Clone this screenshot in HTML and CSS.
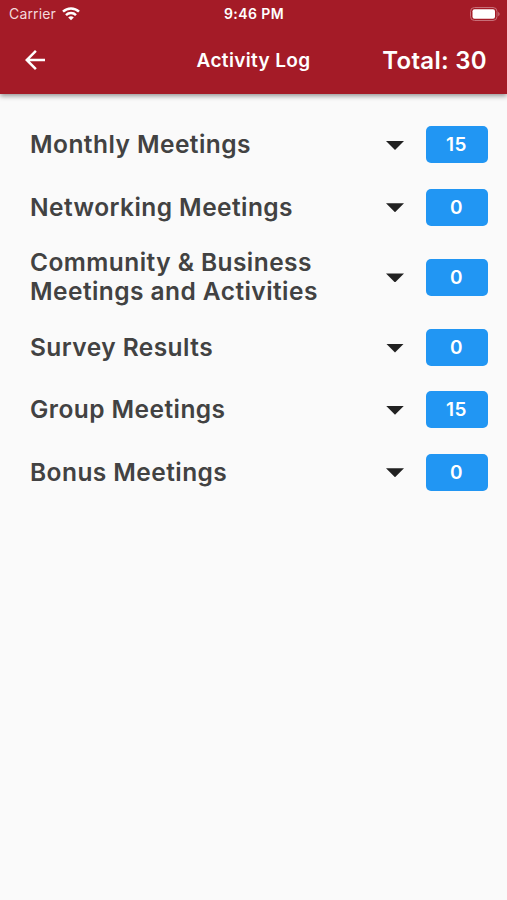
FILE: index.html
```html
<!DOCTYPE html>
<html lang="en">
<head>
<meta charset="utf-8">
<title>Activity Log</title>
<link rel="stylesheet" href="styles.css">
</head>
<body>
<header class="top">
  <div class="status">
    <div class="carrier"><span class="carrier-name">Carrier</span>
      <svg class="wifi" viewBox="0 0 18 14" width="18" height="14"><g fill="none" stroke="#fff" stroke-width="2.5"><path d="M1 4.700a11.500 11.500 0 0 1 16 0"/><path d="M4 8.100a7.200 7.200 0 0 1 10 0"/></g><path fill="#fff" d="M9 13.300 6.200 10.500a4 4 0 0 1 5.600 0z"/></svg>
    </div>
    <span class="clock">9:46 PM</span>
    <svg class="battery" viewBox="0 0 30 14" width="30" height="14"><rect x=".5" y=".5" width="26.500" height="13" rx="4" fill="none" stroke="#c76f78"/><rect x="2.500" y="2.300" width="22.500" height="9.400" rx="2" fill="#fff"/><path d="M28.200 4.700q3 2.300 0 4.600z" fill="#c76f78"/></svg>
  </div>
  <div class="bar">
    <svg class="back" viewBox="4 4 16 16" width="20" height="20"><path fill="#fff" d="M20 11H7.830l5.590-5.590L12 4l-8 8 8 8 1.410-1.410L7.830 13H20z"/></svg>
    <h1 class="title">Activity Log</h1>
    <span class="total">Total: 30</span>
  </div>
</header>
<main class="list">
  <div class="row"><span class="label">Monthly Meetings</span><i class="caret"></i><span class="count">15</span></div>
  <div class="row"><span class="label">Networking Meetings</span><i class="caret"></i><span class="count">0</span></div>
  <div class="row tall"><span class="label">Community &amp; Business<br>Meetings and Activities</span><i class="caret"></i><span class="count">0</span></div>
  <div class="row"><span class="label">Survey Results</span><i class="caret"></i><span class="count">0</span></div>
  <div class="row"><span class="label">Group Meetings</span><i class="caret"></i><span class="count">15</span></div>
  <div class="row"><span class="label">Bonus Meetings</span><i class="caret"></i><span class="count">0</span></div>
</main>
</body>
</html>
```
FILE: styles.css
```css
* { box-sizing: border-box; }
body { margin: 0; min-height: 900px; background: #fafafa; font-family: Inter, "Liberation Sans", sans-serif; color: #424242; }
.top { height: 94px; background: #a41b27; color: #fff; box-shadow: 0 2px 5px rgba(0,0,0,.42); }
.status { height: 27px; display: grid; grid-template-columns: 1fr auto 1fr; align-items: center; padding: 0 7px 0 9px; }
.carrier { display: flex; align-items: center; gap: 6px; font-size: 14px; letter-spacing: .15px; color: #f3d9dc; }
.clock { font-size: 14px; font-weight: 600; letter-spacing: .4px; margin-right: 1px; }
.battery { justify-self: end; }
.bar { height: 66px; display: grid; grid-template-columns: 1fr auto 1fr; align-items: center; padding: 0 20px 0 20px; }
.back { margin: 0 0 1px 5px; }
.title { margin: 0; font-size: 19px; font-weight: 600; letter-spacing: .35px; }
.total { justify-self: end; font-size: 24px; font-weight: 600; letter-spacing: .3px; }
.list { padding: 19.800px 19px 0 30px; }
.row { height: 62.300px; display: flex; align-items: center; }
.tall { height: 78px; }
.label { flex: 1; font-size: 24.500px; line-height: 29px; font-weight: 600; letter-spacing: .44px; white-space: nowrap; }
.caret { width: 18px; height: 9px; margin: 1px 22px 0 0; background: #212121; clip-path: polygon(0 0, 100% 0, 50% 100%); }
.count { width: 62px; height: 37px; padding-right: 1px; border-radius: 5px; background: #2196f3; color: #fff; font-size: 19px; font-weight: 600; letter-spacing: .4px; display: flex; align-items: center; justify-content: center; }
```
